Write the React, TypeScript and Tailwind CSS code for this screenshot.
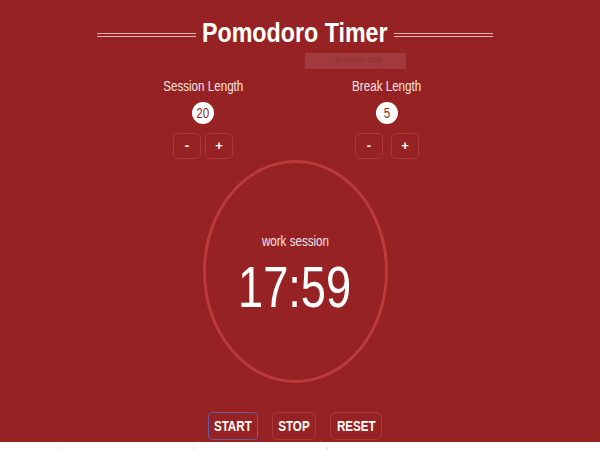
import React, { useState } from "react";

// no narrow face is installed, so text is squeezed to match the reference proportions
const squeeze = "inline-block scale-x-[0.83]";

function Stepper({ label, value, wide }: { label: string; value: number; wide?: boolean }) {
  return (
    <div className="flex w-[120px] flex-col items-center">
      <p className={`${squeeze} whitespace-nowrap text-[14px] leading-[16px] text-[#f4e4e4]`}>{label}</p>
      <div className="mt-[8px] flex h-[22px] w-[22px] items-center justify-center rounded-full bg-white text-[14px] text-[#8a2a2e]">
        <span className={squeeze}>{value}</span>
      </div>
      <div className={wide ? "mt-[9px] flex gap-[8px]" : "mt-[9px] flex gap-[4px]"}>
        <button className="h-[26px] w-[28px] rounded-[5px] border border-[#a9393b] text-[13px] font-bold text-white">-</button>
        <button className="h-[26px] w-[28px] rounded-[5px] border border-[#a9393b] text-[13px] font-bold text-white">+</button>
      </div>
    </div>
  );
}

function DoubleRule() {
  return (
    <div className="mt-[4px] flex w-[99px] flex-col gap-[2px]">
      <span className="h-px bg-[#e8b4b4]" />
      <span className="h-px bg-[#e8b4b4]" />
    </div>
  );
}

export default function App() {
  const [session] = useState(20);
  const [brk] = useState(5);

  return (
    <div
      className="bg-white"
      style={{ fontFamily: "'Liberation Sans', Arial, sans-serif" }}
    >
      <div className="flex h-[442px] w-full flex-col bg-[#962224]">
        <div className="flex w-[590px] flex-col items-center">
          <div className="mt-[17px] flex items-center gap-[6px]">
            <DoubleRule />
            <h1 className={`${squeeze} -mx-[19px] whitespace-nowrap text-[28px] font-bold leading-[32px] text-white`}>
              Pomodoro Timer
            </h1>
            <DoubleRule />
          </div>

          <div className="ml-[121px] mt-[4px] flex h-[16px] w-[101px] items-center justify-center bg-[#a23a3d] text-[9px] text-[#8c3438]">
            <span className={squeeze}>Full-screen Snip</span>
          </div>

          <div className="mt-[9px] flex gap-[64px]">
            <Stepper label="Session Length" value={session} />
            <Stepper label="Break Length" value={brk} wide />
          </div>

          <div className="mt-[1px] flex h-[223px] w-[185px] flex-col items-center rounded-[50%] border-[3px] border-[#bb3a3b] pt-[70px]">
            <p className={`${squeeze} whitespace-nowrap text-[14px] leading-[16px] text-[#f4e4e4]`}>work session</p>
            <p className="mt-[8px] inline-block scale-x-[0.78] text-[58px] leading-[60px] text-white">17:59</p>
          </div>

          <div className="mt-[29px] flex gap-[14px]">
            <button className="h-[28px] w-[50px] rounded-[4px] border-[1.5px] border-[#6a5b9e] text-[14px] font-bold text-white">
              <span className={squeeze}>START</span>
            </button>
            <button className="h-[28px] w-[44px] rounded-[6px] border border-[#a9393b] text-[14px] font-bold text-white">
              <span className={squeeze}>STOP</span>
            </button>
            <button className="h-[28px] w-[52px] rounded-[6px] border border-[#a9393b] text-[14px] font-bold text-white">
              <span className={squeeze}>RESET</span>
            </button>
          </div>
        </div>
      </div>
      <div className="relative h-[8px] w-full bg-white">
        <span className="absolute left-[58px] top-[5px] h-[2px] w-px bg-[#d8d8d8]" />
        <span className="absolute left-[193px] top-[5px] h-[2px] w-px bg-[#d8d8d8]" />
        <span className="absolute left-[327px] top-[5px] h-[2px] w-px bg-[#d8d8d8]" />
      </div>
    </div>
  );
}
